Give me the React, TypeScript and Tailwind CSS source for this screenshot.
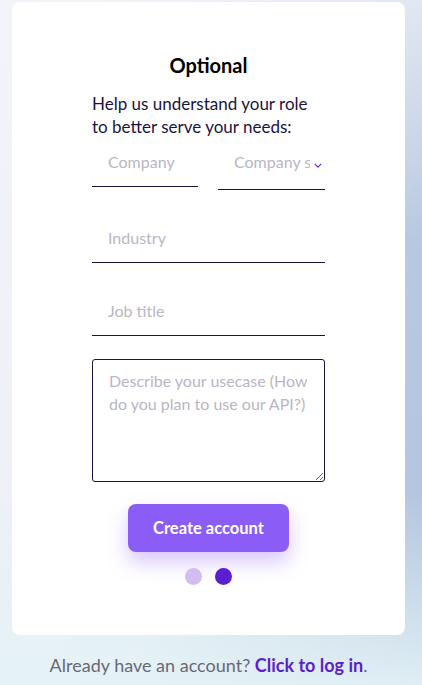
import { useState } from "react";

const FONT = "font-['Lato','Liberation_Sans',sans-serif]";

function UnderlineInput({ placeholder, className = "" }: { placeholder: string; className?: string }) {
  return (
    <input
      placeholder={placeholder}
      className={`h-[46px] border-b border-[#1b1440] bg-transparent px-4 pb-1 text-[16px] text-[#1b1440] outline-none placeholder:text-[#b9b6c4] ${className}`}
    />
  );
}

export default function App() {
  const [step] = useState(1);

  return (
    <div
      className={`${FONT} flex min-h-[685px] w-full flex-col bg-[linear-gradient(180deg,rgba(255,255,255,0)_72%,rgba(228,243,246,0.9)_100%),linear-gradient(180deg,rgba(242,244,249,0.7)_0%,rgba(255,255,255,0)_35%),linear-gradient(95deg,#f1f3f8_0%,#e5eaf2_40%,#c6d2e5_75%,#b0c2de_100%)] pl-3 pt-[2px]`}
    >
      <div className="flex w-[393px] flex-col items-center rounded-lg bg-white pb-[50px] pt-[50px]">
        <h1 className="text-[20px] font-bold leading-[27px] text-black">Optional</h1>

        <div className="mt-[13px] flex w-[233px] flex-col">
          <p className="text-[17px] leading-[23px] text-[#1b1440]">
            Help us understand your role to better serve your needs:
          </p>

          <div className="mt-[3px] flex gap-5">
            <UnderlineInput placeholder="Company" className="w-[106px] shrink-0" />
            <div className="relative w-[107px] shrink-0">
              <select
                defaultValue=""
                className="h-[49px] w-full appearance-none overflow-hidden border-b border-[#1b1440] bg-transparent pb-[7px] pl-4 pr-[15px] text-[16px] text-[#b9b6c4] outline-none"
              >
                <option value="" disabled>
                  Company size
                </option>
              </select>
              <svg
                viewBox="0 0 10 6"
                className="pointer-events-none absolute right-[3px] top-[22px] h-[5px] w-[8px]"
                fill="none"
                stroke="#6d28d9"
                strokeWidth="1.5"
              >
                <path d="M1 1l4 4 4-4" />
              </svg>
            </div>
          </div>

          <UnderlineInput placeholder="Industry" className="mt-[27px] w-full" />
          <UnderlineInput placeholder="Job title" className="mt-[27px] w-full" />

          <textarea
            placeholder="Describe your usecase (How do you plan to use our API?)"
            className="mt-[23px] h-[123px] w-full rounded-[3px] border border-[#1b1440] px-4 py-[9px] text-[16px] leading-[23px] text-[#1b1440] outline-none placeholder:text-[#b9b6c4]"
          />

          <button className="mx-auto mt-[22px] h-12 w-[161px] rounded-lg bg-[#8b5cf6] text-[16.5px] font-bold text-white shadow-[0_10px_20px_rgba(139,92,246,0.35)]">
            Create account
          </button>

          <div className="mt-4 flex justify-center gap-[13px]">
            {[0, 1].map((i) => (
              <span
                key={i}
                className={`h-[17px] w-[17px] rounded-full ${i === step ? "bg-[#5b1fcf]" : "bg-[#d3bdf0]"}`}
              />
            ))}
          </div>
        </div>
      </div>

      <p className="mt-[17px] w-[393px] text-center text-[18px] text-[#6b6777]">
        Already have an account?{" "}
        <a className="font-bold text-[#5b1fd0]">Click to log in</a>.
      </p>
    </div>
  );
}
